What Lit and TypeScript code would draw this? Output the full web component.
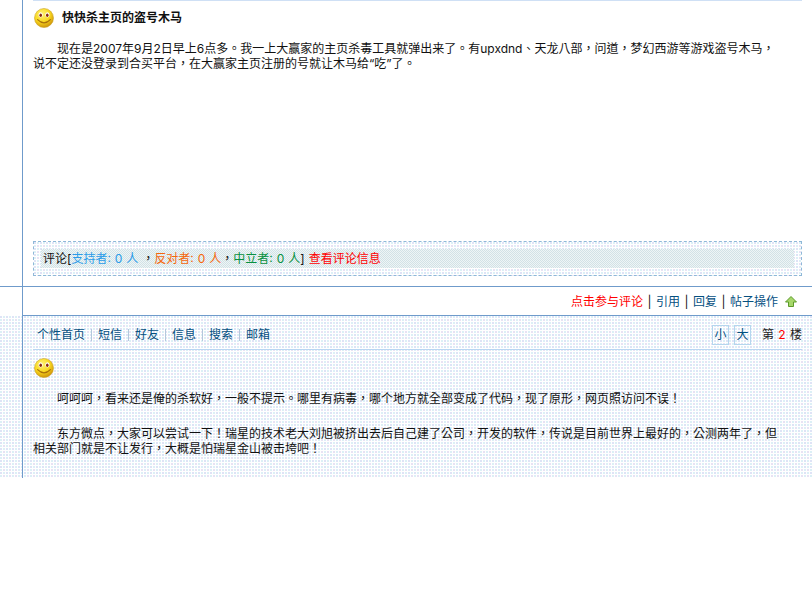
import { LitElement, html, css, svg } from "lit";
import { customElement } from "lit/decorators.js";

const smile = (id: string) => html`<svg class="smile" width="20" height="20" viewBox="0 0 20 20">
  <defs><radialGradient id=${id} cx="40%" cy="30%" r="75%">
    <stop offset="0" stop-color="#fff27a"/><stop offset=".55" stop-color="#f9d81e"/><stop offset="1" stop-color="#c98a08"/>
  </radialGradient></defs>
  <circle cx="10" cy="10" r="9.5" fill="url(#${id})" stroke="#c9a227" stroke-width=".6"/>
  ${svg`<ellipse cx="6.6" cy="6.8" rx="2.1" ry="2.6" fill="#fff"/><ellipse cx="13.4" cy="6.8" rx="2.1" ry="2.6" fill="#fff"/>
  <ellipse cx="6.7" cy="7.2" rx="1.3" ry="1.7" fill="#8a2a10"/><ellipse cx="13.3" cy="7.2" rx="1.3" ry="1.7" fill="#8a2a10"/>
  <path d="M3.6 11.6 Q10 18 16.4 11.6" fill="none" stroke="#a8700a" stroke-width="1.2" stroke-linecap="round"/>`}
</svg>`;

@customElement("app-root")
export class AppRoot extends LitElement {
  static styles = css`
    :host {
      display: block;
      width: 812px;
      height: 600px;
      background: #fff;
      font: 12px/15px Inter, "Noto Sans CJK TC", "Liberation Sans", sans-serif;
      color: #111;
      --line: #6f9bcb;
      --dots: url("data:image/svg+xml,%3Csvg xmlns='http://www.w3.org/2000/svg' width='6' height='6' shape-rendering='crispEdges'%3E%3Crect width='6' height='6' fill='%23ffffff'/%3E%3Crect x='0' y='0' width='2' height='2' fill='%23dfe3f6'/%3E%3Crect x='3' y='0' width='2' height='2' fill='%23dcf0f6'/%3E%3Crect x='0' y='3' width='2' height='2' fill='%23dcf0f6'/%3E%3Crect x='3' y='3' width='2' height='2' fill='%23e8e2f4'/%3E%3C/svg%3E");
      --check: url("data:image/svg+xml,%3Csvg xmlns='http://www.w3.org/2000/svg' width='2' height='2' shape-rendering='crispEdges'%3E%3Crect width='2' height='2' fill='%23eef5f6'/%3E%3Crect width='1' height='1' fill='%23d2e2e6'/%3E%3Crect x='1' y='1' width='1' height='1' fill='%23d2e2e6'/%3E%3C/svg%3E");
    }
    .row {
      display: grid;
      grid-template-columns: 23px 1fr;
    }
    .side { border-right: 1px solid var(--line); }

    .first { height: 286px; border-bottom: 1px solid var(--line); }
    .first .main { padding: 0 10px; display: flex; flex-direction: column; }
    .top-rule { height: 1px; background: #cfe0f5; margin-bottom: 7px; }
    .title { display: flex; align-items: center; gap: 8px; height: 20px; font-weight: 700; margin-left: 1px; }
    .title span { margin-top: -2px; }
    .smile { flex: none; display: block; }
    p { margin: 0; text-indent: 24px; }
    .body { margin-top: 13px; }

    .cbox {
      margin-top: auto;
      margin-bottom: 10px;
      height: 19px;
      border: 1px dashed #8fb8d8;
      background: var(--dots);
      padding: 7px;
    }
    .cbar {
      height: 19px;
      padding-left: 2px;
      line-height: 19px;
      word-spacing: 0.6px;
      background: var(--check);
    }
    .sup { color: #2a9be8; }
    .opp { color: #f5660c; }
    .neu { color: #079040; }
    .red { color: #f00; }

    .actions {
      height: 28px;
      border-bottom: 1px solid var(--line);
      display: flex;
      justify-content: flex-end;
      align-items: center;
      padding-right: 15px;
      color: #05507f;
    }
    .actions .sep { color: #111; margin: 0 4px; width: 5px; text-align: center; }
    .actions svg { margin-left: 7px; display: block; }

    .second { background: var(--dots); height: 162px; }
    .second .main { padding: 0 10px; }
    .bar {
      height: 34px;
      border-bottom: 1px solid #b9d6f2;
      display: flex;
      align-items: center;
      padding: 4px 0 0 4px;
      box-sizing: border-box;
      color: #05507f;
    }
    .nav { display: flex; align-items: center; }
    .nav i { width: 1px; height: 12px; background: #b4c8dc; margin: 0 6px; }
    .sizes { margin-left: auto; display: flex; gap: 5px; align-items: center; }
    .sizes span {
      width: 15px;
      height: 18px;
      border: 1px solid #b5d6ee;
      display: grid;
      place-items: center;
    }
    .floor { color: #222; margin-left: 11px; word-spacing: 1px; }
    .second .smile { margin: 8px 0 0 1px; }
    .post { margin-top: 13px; }
    .post p + p { margin-top: 20px; }
  `;

  render() {
    return html`
      <div class="row first">
        <div class="side"></div>
        <div class="main">
          <div class="top-rule"></div>
          <div class="title">${smile("s1")}<span>快快杀主页的盗号木马</span></div>
          <p class="body">现在是2007年9月2日早上6点多。我一上大赢家的主页杀毒工具就弹出来了。有upxdnd、天龙八部，问道，梦幻西游等游戏盗号木马，<br />说不定还没登录到合买平台，在大赢家主页注册的号就让木马给“吃”了。</p>
          <div class="cbox">
            <div class="cbar">评论[<span class="sup">支持者: 0 人</span> ，<span class="opp">反对者: 0 人</span>，<span class="neu">中立者: 0 人</span>] <span class="red">查看评论信息</span></div>
          </div>
        </div>
      </div>
      <div class="row">
        <div class="side"></div>
        <div class="main actions">
          <span class="red">点击参与评论</span><span class="sep">|</span><span>引用</span><span class="sep">|</span><span>回复</span><span class="sep">|</span><span>帖子操作</span>
          <svg width="12" height="11" viewBox="0 0 12 11"><path d="M6 .5 11.5 6H8.5V10.5H3.5V6H.5Z" fill="#a6d76a" stroke="#5d9a2a" stroke-width="1"/></svg>
        </div>
      </div>
      <div class="row second">
        <div class="side"></div>
        <div class="main">
          <div class="bar">
            <div class="nav"><span>个性首页</span><i></i><span>短信</span><i></i><span>好友</span><i></i><span>信息</span><i></i><span>搜索</span><i></i><span>邮箱</span></div>
            <div class="sizes"><span>小</span><span>大</span></div>
            <div class="floor">第 <span class="red">2</span> 楼</div>
          </div>
          ${smile("s2")}
          <div class="post">
            <p>呵呵呵，看来还是俺的杀软好，一般不提示。哪里有病毒，哪个地方就全部变成了代码，现了原形，网页照访问不误！</p>
            <p>东方微点，大家可以尝试一下！瑞星的技术老大刘旭被挤出去后自己建了公司，开发的软件，传说是目前世界上最好的，公测两年了，但<br />相关部门就是不让发行，大概是怕瑞星金山被击垮吧！</p>
          </div>
        </div>
      </div>
    `;
  }
}
